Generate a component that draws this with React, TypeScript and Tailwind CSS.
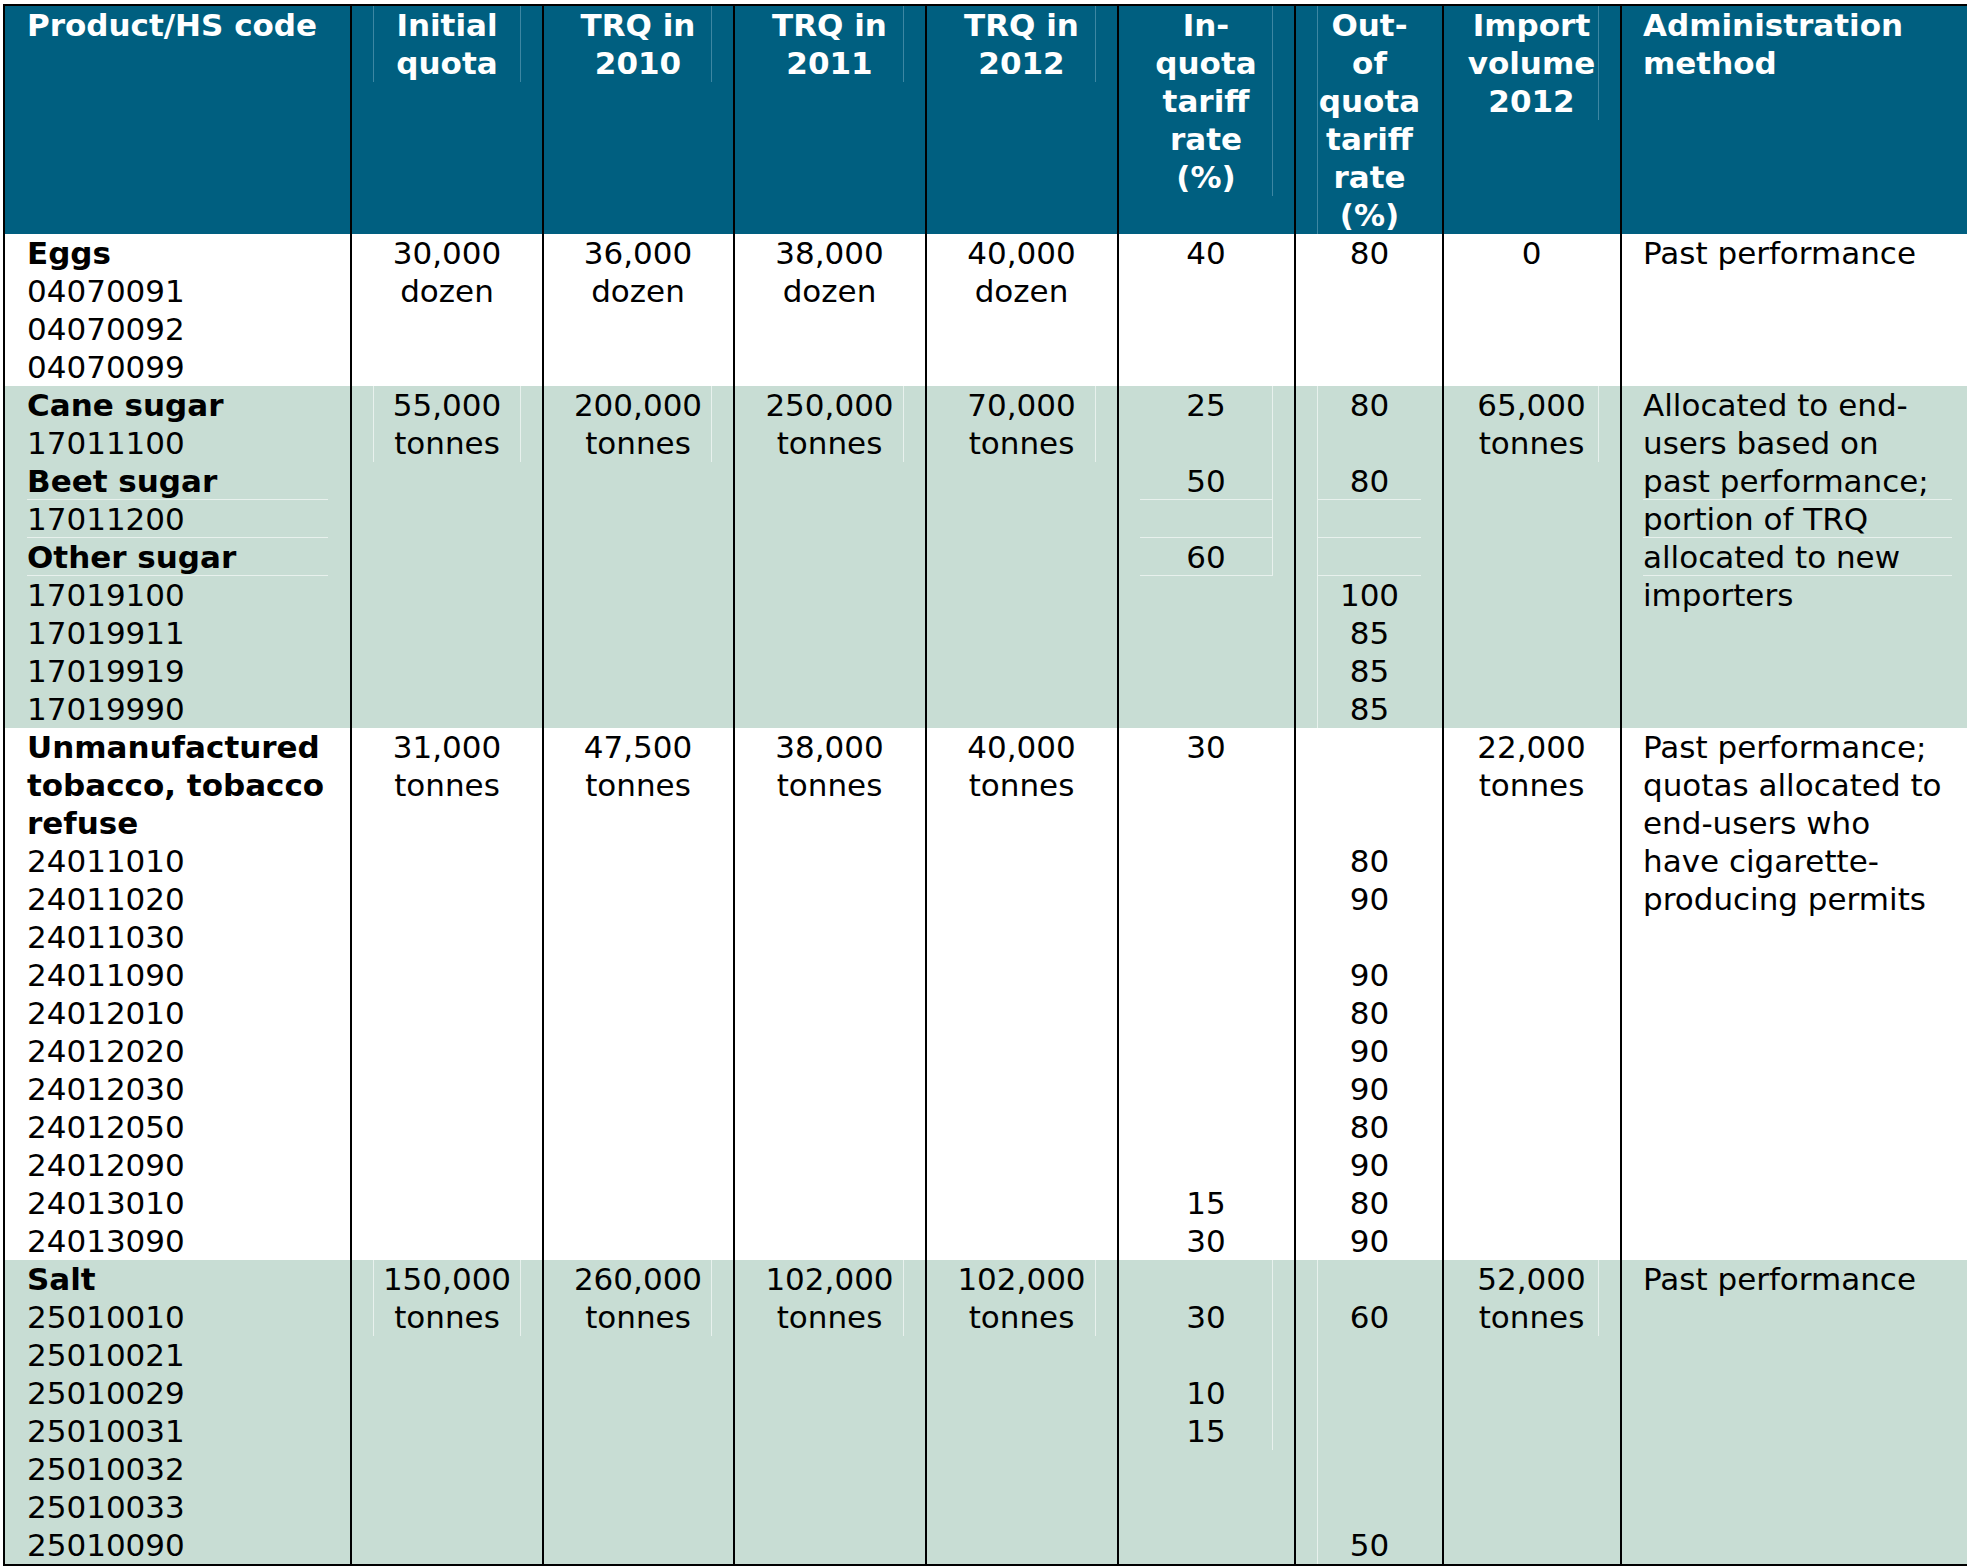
import React from "react";
import clsx from "clsx";

type Line = string | { t: string; b?: boolean };

const COLS =
  "grid grid-cols-[345px_192px_191px_192px_192px_177px_148px_178px_347px]";

interface CellProps {
  lines: Line[];
  col: number;
  faint: string;
  bottoms?: number[];
  bold?: boolean;
}

function Cell({ lines, col, faint, bottoms = [], bold }: CellProps) {
  const first = col === 0;
  const last = col === 8;
  const center = !first && !last;
  const edgeL = col === 1 || col === 6;
  const edgeR = col === 1 || col === 2 || col === 3 || col === 4 || col === 5 || col === 7;
  return (
    <div
      className={clsx(
        first
          ? "pl-[22px] pr-[22px]"
          : last
          ? "border-l-2 border-black pl-[21px] pr-[15px]"
          : "border-l-2 border-black pl-[21px] pr-[21px]"
      )}
    >
      <div
        className={clsx(
          edgeL && "border-l",
          edgeR && "border-r",
          faint,
          center ? "text-center" : "text-left"
        )}
      >
        {lines.map((ln, i) => {
          const text = typeof ln === "string" ? ln : ln.t;
          const isBold = bold || (typeof ln !== "string" && ln.b);
          return (
            <div
              key={i}
              className={clsx(
                "h-[38px] whitespace-nowrap",
                bottoms.includes(i) && "border-b",
                faint,
                isBold && "font-bold"
              )}
            >
              {text}
            </div>
          );
        })}
      </div>
    </div>
  );
}

interface RowProps {
  cells: Line[][];
  bg: string;
  faint: string;
  bottoms?: { [k: number]: number[] };
  bold?: boolean;
}

function Row({ cells, bg, faint, bottoms = {}, bold }: RowProps) {
  return (
    <div className={clsx(COLS, bg)}>
      {cells.map((c, i) => (
        <Cell key={i} col={i} lines={c} faint={faint} bottoms={bottoms[i]} bold={bold} />
      ))}
    </div>
  );
}

const B = (t: string) => ({ t, b: true });

export default function App() {
  const header: Line[][] = [
    ["Product/HS code"],
    ["Initial", "quota"],
    ["TRQ in", "2010"],
    ["TRQ in", "2011"],
    ["TRQ in", "2012"],
    ["In-", "quota", "tariff", "rate", "(%)"],
    ["Out-", "of", "quota", "tariff", "rate", "(%)"],
    ["Import", "volume", "2012"],
    ["Administration", "method"],
  ];

  const eggs: Line[][] = [
    [B("Eggs"), "04070091", "04070092", "04070099"],
    ["30,000", "dozen"],
    ["36,000", "dozen"],
    ["38,000", "dozen"],
    ["40,000", "dozen"],
    ["40"],
    ["80"],
    ["0"],
    ["Past performance"],
  ];

  const sugar: Line[][] = [
    [
      B("Cane sugar"),
      "17011100",
      B("Beet sugar"),
      "17011200",
      B("Other sugar"),
      "17019100",
      "17019911",
      "17019919",
      "17019990",
    ],
    ["55,000", "tonnes"],
    ["200,000", "tonnes"],
    ["250,000", "tonnes"],
    ["70,000", "tonnes"],
    ["25", "", "50", "", "60"],
    ["80", "", "80", "", "", "100", "85", "85", "85"],
    ["65,000", "tonnes"],
    [
      "Allocated to end-",
      "users based on",
      "past performance;",
      "portion of TRQ",
      "allocated to new",
      "importers",
    ],
  ];

  const tobacco: Line[][] = [
    [
      B("Unmanufactured"),
      B("tobacco, tobacco"),
      B("refuse"),
      "24011010",
      "24011020",
      "24011030",
      "24011090",
      "24012010",
      "24012020",
      "24012030",
      "24012050",
      "24012090",
      "24013010",
      "24013090",
    ],
    ["31,000", "tonnes"],
    ["47,500", "tonnes"],
    ["38,000", "tonnes"],
    ["40,000", "tonnes"],
    ["30", "", "", "", "", "", "", "", "", "", "", "", "15", "30"],
    ["", "", "", "80", "90", "", "90", "80", "90", "90", "80", "90", "80", "90"],
    ["22,000", "tonnes"],
    [
      "Past performance;",
      "quotas allocated to",
      "end-users who",
      "have cigarette-",
      "producing permits",
    ],
  ];

  const salt: Line[][] = [
    [
      B("Salt"),
      "25010010",
      "25010021",
      "25010029",
      "25010031",
      "25010032",
      "25010033",
      "25010090",
    ],
    ["150,000", "tonnes"],
    ["260,000", "tonnes"],
    ["102,000", "tonnes"],
    ["102,000", "tonnes"],
    ["", "30", "", "10", "15"],
    ["", "60", "", "", "", "", "", "50"],
    ["52,000", "tonnes"],
    ["Past performance"],
  ];

  const sugarBottoms = { 0: [2, 3, 4], 5: [2, 3, 4], 6: [2, 3, 4], 8: [2, 3, 4] };

  return (
    <div className="w-[1967px] h-[1567px] bg-white overflow-hidden">
      <div className="mt-[4px] ml-[3px] border-l-2 border-t-2 border-b-2 border-black font-['DejaVu_Sans','Verdana',sans-serif] text-[31px] leading-[38px] text-black">
        <Row cells={header} bg="bg-[#005f80] text-white" faint="border-[#3d87a3]" bold />
        <Row cells={eggs} bg="bg-white" faint="border-white" />
        <Row cells={sugar} bg="bg-[#c8ddd4]" faint="border-[#e8f1ed]" bottoms={sugarBottoms} />
        <Row cells={tobacco} bg="bg-white" faint="border-white" />
        <Row cells={salt} bg="bg-[#c8ddd4]" faint="border-[#e8f1ed]" />
      </div>
    </div>
  );
}
